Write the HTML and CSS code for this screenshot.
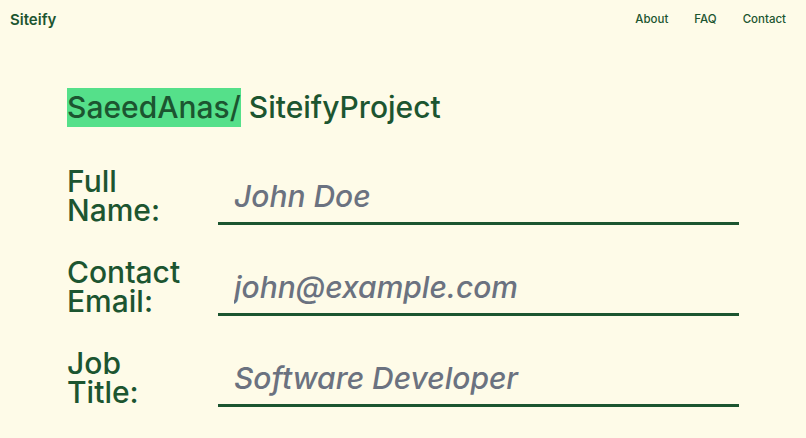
FILE: index.html
```html
<!DOCTYPE html>
<html lang="en">
<head>
  <meta charset="UTF-8">
  <meta name="viewport" content="width=device-width, initial-scale=1.0">
  <title>Siteify</title>
  <link rel="stylesheet" href="styles.css">
</head>
<body>

<nav class="navbar">
  <a href="#" class="brand">Siteify</a>
  <div class="nav-links">
    <a href="#">About</a>
    <a href="#">FAQ</a>
    <a href="#">Contact</a>
  </div>
</nav>

<main class="content">
  <h1 class="repo-title"><span class="owner">SaeedAnas/</span> SiteifyProject</h1>

  <form class="info-form">
    <div class="form-row">
      <label for="full-name">Full Name:</label>
      <input type="text" id="full-name" placeholder="John Doe">
    </div>
    <div class="form-row">
      <label for="email">Contact Email:</label>
      <input type="email" id="email" placeholder="john@example.com">
    </div>
    <div class="form-row">
      <label for="job-title">Job Title:</label>
      <input type="text" id="job-title" placeholder="Software Developer">
    </div>
  </form>
</main>

</body>
</html>
```

FILE: styles.css
```css
* {
  box-sizing: border-box;
}

body {
  margin: 0;
  padding: 0;
  font-family: Inter, 'Noto Sans', sans-serif;
  background-color: #fefbe8;
  color: #1c5530;
  height: 100vh;
  overflow: hidden;
}

.navbar {
  display: flex;
  justify-content: space-between;
  align-items: center;
  height: 38px;
  padding: 0 20px 0 10px;
}

.navbar a {
  color: #1c5530;
  text-decoration: none;
}

.brand {
  font-size: 15px;
  font-weight: 600;
}

.nav-links {
  display: flex;
  gap: 26px;
  font-size: 11.5px;
  font-weight: 500;
}

.content {
  padding: 50px 67px 0 67px;
}

.repo-title {
  margin: 0 0 40px 0;
  font-size: 30px;
  font-weight: 500;
  line-height: 39px;
}

.owner {
  display: inline-block;
  background-color: #55e08a;
}

.info-form {
  display: flex;
  flex-direction: column;
  gap: 33px;
}

.form-row {
  display: grid;
  grid-template-columns: 125px 521px;
  column-gap: 26px;
  align-items: end;
}

label {
  font-size: 30px;
  font-weight: 500;
  line-height: 29px;
}

input {
  width: 100%;
  padding: 6px 16px 8px;
  font-family: inherit;
  font-size: 30px;
  font-style: italic;
  font-weight: 500;
  color: #1c5530;
  background: transparent;
  border: none;
  border-bottom: 3px solid #1c5530;
  outline: none;
}

input::placeholder {
  color: #6b7280;
}
```
